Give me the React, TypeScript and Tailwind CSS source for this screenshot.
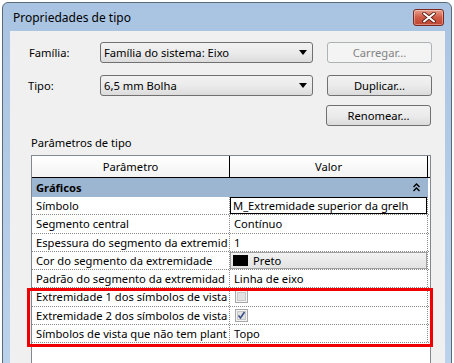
import React from "react";

const rows: { name: string; value: React.ReactNode; kind?: string }[] = [
  { name: "Símbolo", value: "M_Extremidade superior da grelh", kind: "edit" },
  { name: "Segmento central", value: "Contínuo" },
  { name: "Espessura do segmento da extremid", value: "1" },
  { name: "Cor do segmento da extremidade", value: "Preto", kind: "color" },
  { name: "Padrão do segmento da extremidad", value: "Linha de eixo" },
  { name: "Extremidade 1 dos símbolos de vista", value: false, kind: "check" },
  { name: "Extremidade 2 dos símbolos de vista", value: true, kind: "check" },
  { name: "Símbolos de vista que não tem plant", value: "Topo" },
];

function CloseButton() {
  return (
    <div className="w-[31px] h-[17px] rounded-[3px] border border-[#7a2a20] bg-gradient-to-b from-[#e8a08e] via-[#cf5a45] to-[#c0452f] flex items-center justify-center shadow-[inset_0_0_0_1px_rgba(255,255,255,0.35)]">
      <svg width="14" height="11" viewBox="0 0 14 11">
        <path d="M2 1.5 L12 9.5 M12 1.5 L2 9.5" stroke="#5a1d14" strokeWidth="3.6" strokeLinecap="round" />
        <path d="M2 1.5 L12 9.5 M12 1.5 L2 9.5" stroke="#ffffff" strokeWidth="2" strokeLinecap="round" />
      </svg>
    </div>
  );
}

function Combo({ text }: { text: string }) {
  return (
    <div className="w-[213px] h-[21px] rounded-[3px] border border-[#707070] bg-gradient-to-b from-[#f2f2f2] via-[#ebebeb] to-[#dcdcdc] flex items-center pl-[3px] pr-[5px]">
      <span className="flex-1">{text}</span>
      <svg width="8" height="5" viewBox="0 0 8 5">
        <path d="M0 0 H8 L4 5 Z" fill="#000" />
      </svg>
    </div>
  );
}

function Button({ label, disabled }: { label: string; disabled?: boolean }) {
  return (
    <div
      className={
        disabled
          ? "w-[105px] h-[21px] rounded-[3px] border border-[#adb2b5] bg-[#f4f4f4] text-[#838383] flex items-center justify-center"
          : "w-[105px] h-[21px] rounded-[3px] border border-[#707070] bg-gradient-to-b from-[#f2f2f2] via-[#ebebeb] to-[#dcdcdc] flex items-center justify-center"
      }
    >
      {label}
    </div>
  );
}

function CheckBox({ checked }: { checked: boolean }) {
  return (
    <svg width="13" height="13" viewBox="0 0 13 13">
      <rect x="0.5" y="0.5" width="12" height="12" fill="#f4f4f4" stroke="#a8a8a8" />
      <rect x="2.5" y="2.5" width="8" height="8" fill="#e2e2e2" stroke="#c8c8c8" />
      {checked && <path d="M3.5 6.5 L5.5 9 L9.5 3" stroke="#3a4f8a" strokeWidth="1.6" fill="none" />}
    </svg>
  );
}

export default function App() {
  return (
    <div className="w-[454px] h-[363px] bg-white overflow-hidden relative font-['Noto_Sans',sans-serif] text-[11.2px] text-black leading-none">
      <div className="ml-[2px] mt-[2px] w-[450px] h-[380px] rounded-t-[6px] border border-[#5c6a78] bg-gradient-to-b from-[#a9c4e2] to-[#bcd3ec] flex flex-col pl-[7px] pr-[6px]">
        <div className="h-[28px] flex items-center justify-between pr-[1px]">
          <span className="pl-[3px] pt-[2px] text-[12px]">Propriedades de tipo</span>
          <CloseButton />
        </div>

        <div className="flex-1 bg-[#f0f0f0] flex flex-col pt-[11px]">
          <div className="flex items-center h-[21px]">
            <span className="w-[90px] pl-[19px]">Família:</span>
            <Combo text="Família do sistema: Eixo" />
            <div className="ml-[14px]">
              <Button label="Carregar..." disabled />
            </div>
          </div>
          <div className="flex items-center h-[21px] mt-[12px]">
            <span className="w-[90px] pl-[18px]">Tipo:</span>
            <Combo text="6,5 mm Bolha" />
            <div className="ml-[14px]">
              <Button label="Duplicar..." />
            </div>
          </div>
          <div className="flex h-[21px] mt-[9px] pl-[316px]">
            <Button label="Renomear..." />
          </div>

          <div className="pl-[21px] mt-[11px] h-[18px]">Parâmetros de tipo</div>

          <div className="ml-[21px] w-[400px] flex-1 bg-white border-l border-t border-r border-[#828790]">
            <div className="flex h-[22px] bg-gradient-to-b from-[#ffffff] to-[#f3f3f3] border-b border-black">
              <div className="w-[198px] flex items-center justify-center border-r border-black">Parâmetro</div>
              <div className="w-[198px] flex items-center justify-center border-r border-black">Valor</div>
            </div>
            <div className="flex items-center justify-between h-[19px] bg-[#9cb5d0] pl-[4px] pr-[8px] w-[396px]">
              <span className="font-bold">Gráficos</span>
              <svg width="7" height="9" viewBox="0 0 7 9">
                <path d="M0.5 4 L3.5 1 L6.5 4 M0.5 8 L3.5 5 L6.5 8" stroke="#000" strokeWidth="1.4" fill="none" />
              </svg>
            </div>
            {rows.map((r, i) => (
              <div key={i} className="flex h-[18.25px] w-[397px] border-b border-dotted border-[#8a8a8a]">
                <div className="w-[198px] pl-[4px] flex items-center whitespace-nowrap overflow-hidden border-r border-dotted border-[#8a8a8a]">
                  {r.name}
                </div>
                <div className="w-[198px] flex items-center whitespace-nowrap overflow-hidden border-r border-dotted border-[#8a8a8a]">
                  {r.kind === "edit" && (
                    <div className="w-full h-full border border-black bg-white flex items-center pl-[2px]">{r.value}</div>
                  )}
                  {r.kind === "color" && (
                    <div className="w-full h-full bg-gradient-to-b from-[#f2f2f2] to-[#e3e3e3] border border-[#a0a0a0] flex items-center pl-[2px] gap-[5px]">
                      <div className="w-[15px] h-[11px] bg-black" />
                      <span>{r.value}</span>
                    </div>
                  )}
                  {r.kind === "check" && (
                    <div className="pl-[5px] flex items-center">
                      <CheckBox checked={r.value as boolean} />
                    </div>
                  )}
                  {!r.kind && <span className="pl-[4px]">{r.value}</span>}
                </div>
              </div>
            ))}
          </div>
        </div>
      </div>

      <div className="absolute left-[27px] top-[288px] w-[406px] h-[59px] border-[3px] border-[#f00000]" />
    </div>
  );
}
